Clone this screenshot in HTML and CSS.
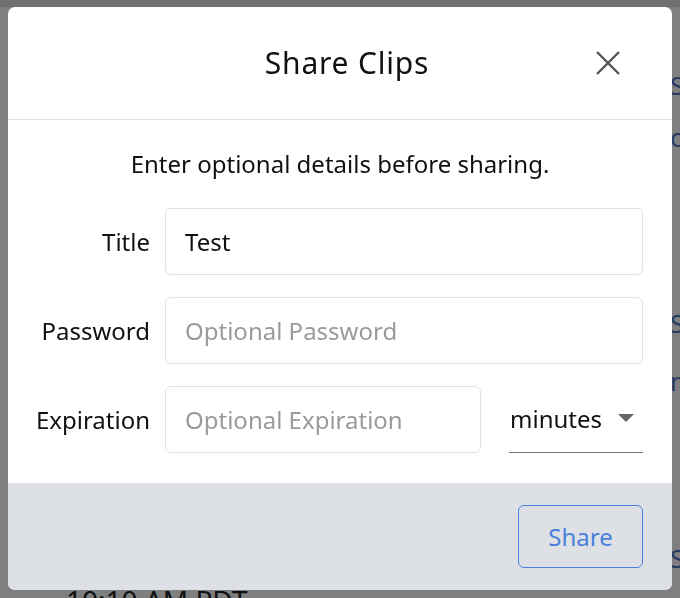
FILE: index.html
```html
<!DOCTYPE html>
<html lang="en">
<head>
<meta charset="utf-8">
<title>Share Clips</title>
<link rel="stylesheet" href="styles.css">
</head>
<body>
<div class="page">
  <div class="page-top"></div>
  <div class="page-list">
    <div class="bg-link l1">Share</div>
    <div class="bg-link l2">ops</div>
    <div class="bg-link l3">Share</div>
    <div class="bg-link l4">ng</div>
    <div class="bg-link l5">Share</div>
    <div class="bg-time">10:10 AM PDT</div>
  </div>
</div>
<div class="backdrop">
  <div class="modal">
    <div class="modal-header">
      <h2 class="modal-title">Share Clips</h2>
      <button class="close" type="button" aria-label="Close">
        <svg width="24" height="24" viewBox="0 0 24 24"><path d="M1 1 L23 23 M23 1 L1 23" stroke="#555" stroke-width="2.4" fill="none" stroke-linecap="butt"/></svg>
      </button>
    </div>
    <div class="modal-body">
      <p class="intro">Enter optional details before sharing.</p>
      <div class="form">
        <label class="label">Title</label>
        <input class="field" type="text" value="Test">
        <label class="label">Password</label>
        <input class="field" type="text" placeholder="Optional Password">
        <label class="label">Expiration</label>
        <div class="exp">
          <input class="field" type="text" placeholder="Optional Expiration">
          <div class="select">
            <span>minutes</span>
            <svg width="16" height="8" viewBox="0 0 16 8"><path d="M0 0 H16 L8 8 Z" fill="#666"/></svg>
          </div>
        </div>
      </div>
    </div>
    <div class="modal-footer">
      <button class="share" type="button">Share</button>
    </div>
  </div>
</div>
</body>
</html>
```
FILE: styles.css
```css
html, body {
  margin: 0;
  padding: 0;
}
body {
  width: 680px;
  height: 598px;
  overflow: hidden;
  background: #ffffff;
  font-family: "Noto Sans", Lato, sans-serif;
  color: #111;
}
.page {
  width: 680px;
  overflow: hidden;
}
.page-top {
  height: 7px;
  background: #dde1e5;
}
.page-list {
  display: flex;
  flex-direction: column;
}
.bg-link {
  padding-left: 670px;
  font-size: 26px;
  line-height: 30px;
  color: #4a76c8;
  white-space: nowrap;
}
.l1 { margin-top: 63px; }
.l2 { margin-top: 22px; }
.l3 { margin-top: 156px; }
.l4 { margin-top: 28px; }
.l5 { margin-top: 147px; }
.bg-time {
  margin-top: 12px;
  padding-left: 66px;
  font-size: 28px;
  line-height: 30px;
  color: #222;
}
.backdrop {
  position: fixed;
  inset: 0;
  background: rgba(0, 0, 0, 0.5);
  padding: 7px 8px 8px 8px;
  display: flex;
}
.modal {
  flex: 1;
  background: #fff;
  border-radius: 7px;
  overflow: hidden;
  display: flex;
  flex-direction: column;
}
.modal-header {
  height: 112px;
  border-bottom: 1px solid #dee2e6;
  display: flex;
  align-items: center;
  padding-right: 52px;
}
.modal-title {
  flex: 1;
  margin: 0;
  padding-left: 90px;
  text-align: center;
  font-weight: 400;
  font-size: 30px;
  letter-spacing: 0.8px;
  line-height: 36px;
  color: #111;
}
.close {
  width: 24px;
  height: 24px;
  padding: 0;
  border: 0;
  background: none;
  display: flex;
}
.modal-body {
  flex: 1;
  padding: 29px 29px 0 0;
}
.intro {
  margin: 0 0 29px 0;
  padding-left: 29px;
  text-align: center;
  font-size: 24px;
  line-height: 30px;
}
.form {
  display: grid;
  grid-template-columns: 142px 1fr;
  column-gap: 15px;
  row-gap: 22px;
  align-items: center;
}
.label {
  text-align: right;
  font-size: 24px;
}
.field {
  box-sizing: border-box;
  height: 67px;
  width: 100%;
  min-width: 0;
  margin: 0;
  padding: 0 19px;
  border: 1px solid #e2e2e2;
  border-radius: 6px;
  font-family: inherit;
  font-size: 24px;
  color: #111;
  outline: none;
}
.field::placeholder {
  color: #9a9a9a;
}
.exp {
  display: flex;
  align-items: center;
  gap: 28px;
}
.select {
  box-sizing: border-box;
  flex: 0 0 134px;
  height: 67px;
  border-bottom: 1px solid #777;
  display: flex;
  align-items: center;
  justify-content: space-between;
  padding: 0 9px 2px 1px;
  font-size: 24px;
}
.modal-footer {
  height: 107px;
  background: #dde1e5;
  display: flex;
  align-items: center;
  justify-content: flex-end;
  padding-right: 29px;
}
.share {
  width: 125px;
  height: 63px;
  border: 1px solid #4a82dd;
  border-radius: 6px;
  background: transparent;
  color: #4a80da;
  font-family: inherit;
  font-size: 24px;
  padding: 0;
}
```
